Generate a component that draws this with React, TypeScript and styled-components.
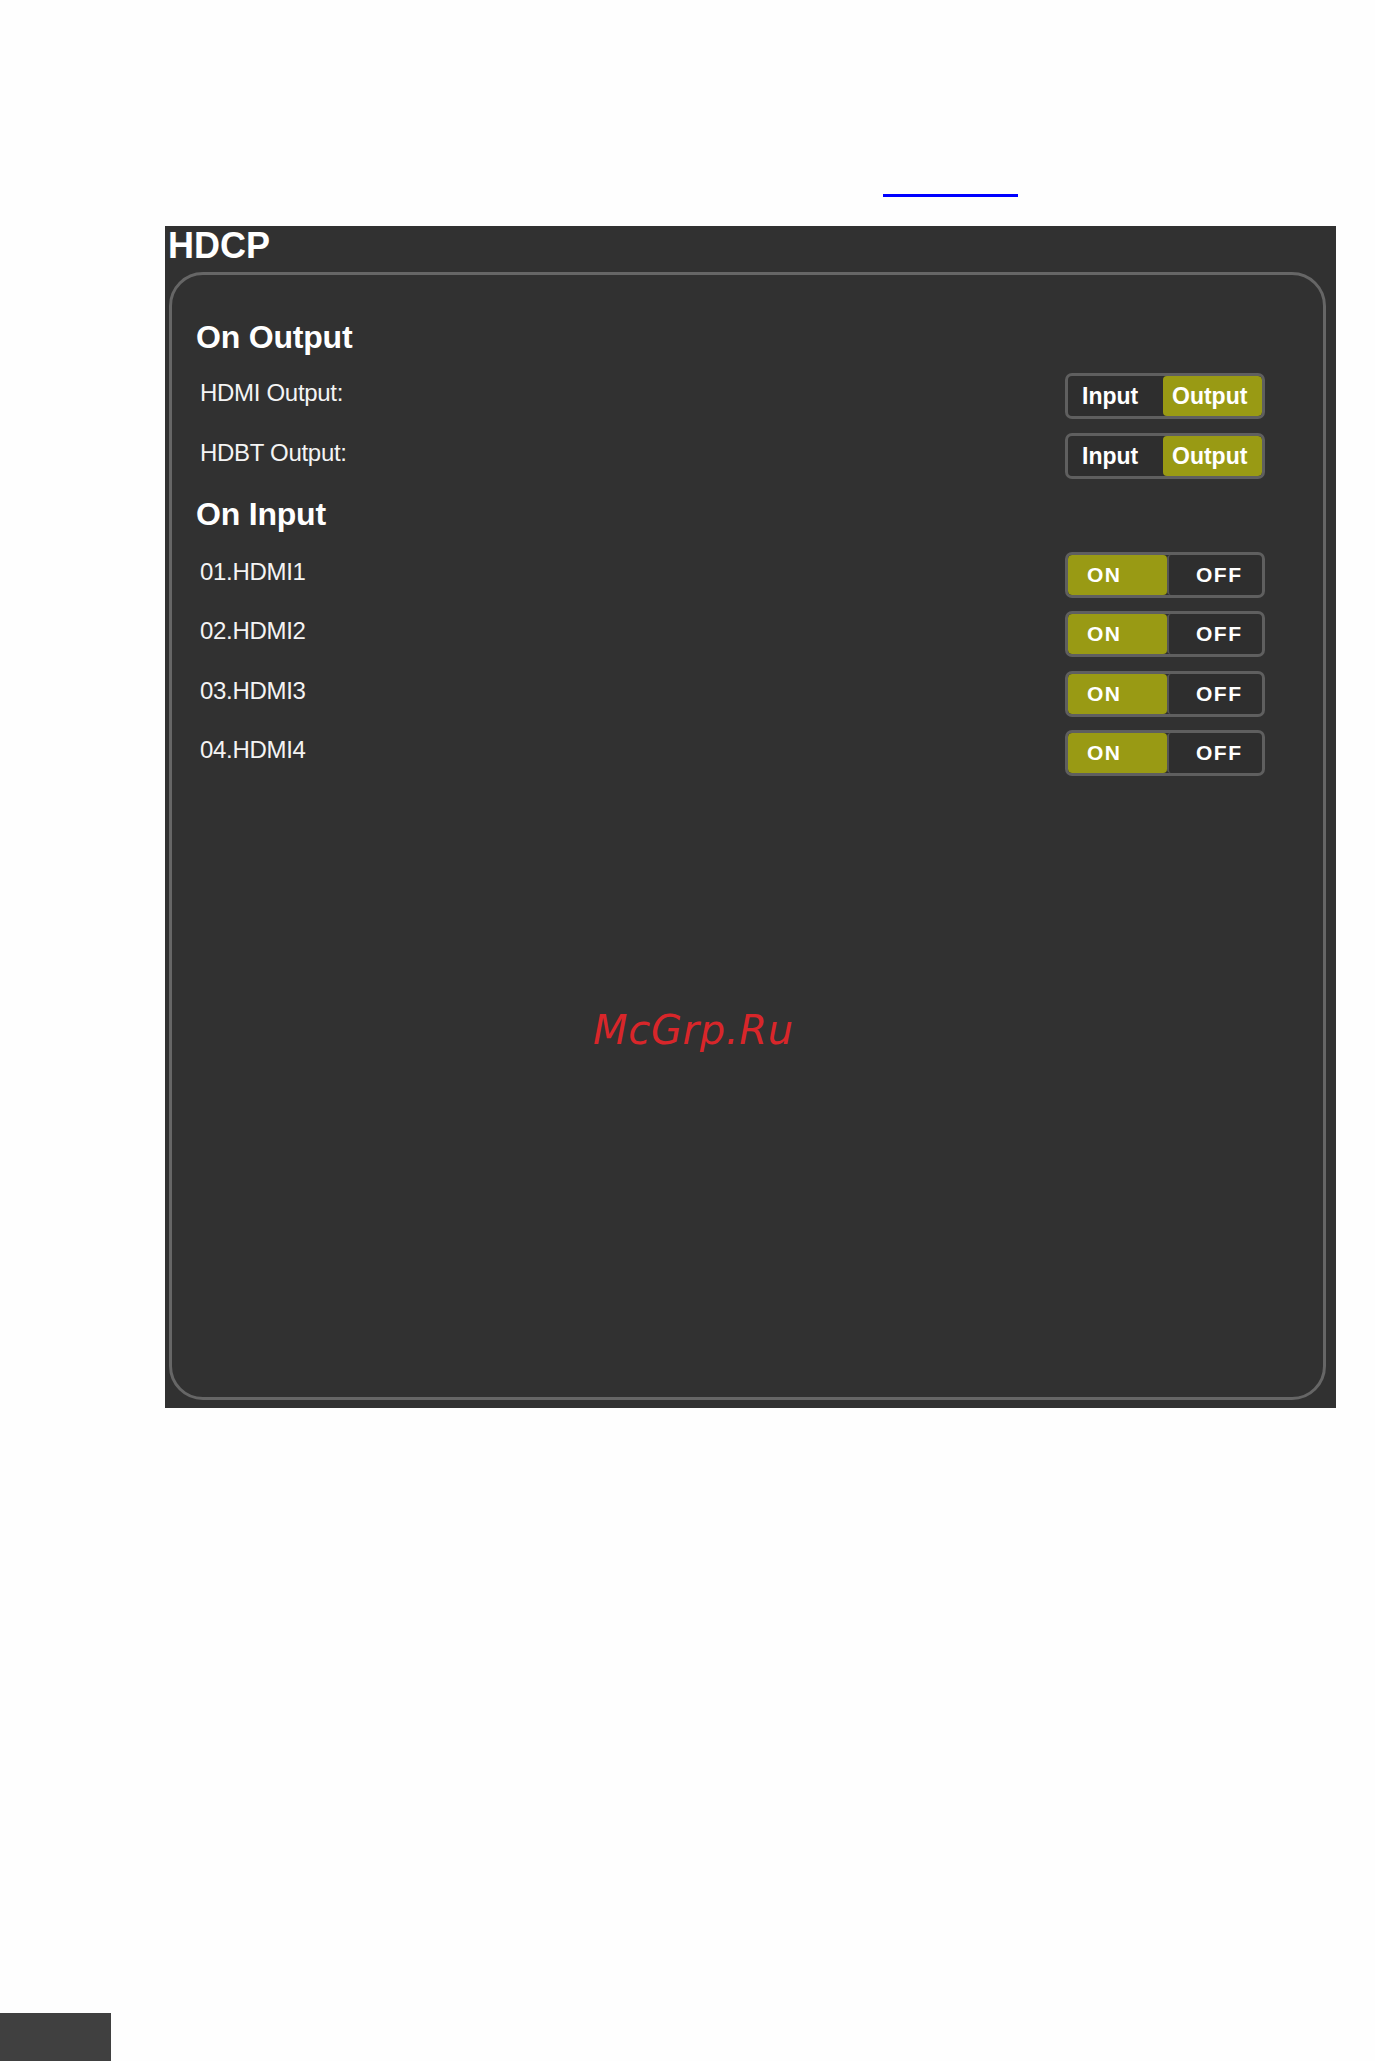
import React from "react";
import styled, { createGlobalStyle } from "styled-components";

const Global = createGlobalStyle`
  html, body { margin: 0; padding: 0; background: #fefefe; }
  body { font-family: "Liberation Sans", Arial, sans-serif; }
  * { box-sizing: border-box; }
`;

const Page = styled.div`
  position: relative;
  min-height: 2061px;
  display: flex;
  flex-direction: column;
`;

const Header = styled.div`
  height: 226px;
  padding: 194px 0 0 883px;
`;

const LinkLine = styled.a`
  display: block;
  width: 135px;
  height: 3px;
  background: #0000ff;
`;

const Panel = styled.section`
  margin-left: 165px;
  width: 1171px;
  height: 1182px;
  background: #313131;
  padding: 2px 10px 8px 4px;
  display: flex;
  flex-direction: column;
`;

const Title = styled.h1`
  margin: 0 0 8px -1px;
  font-size: 36px;
  line-height: 36px;
  font-weight: 700;
  letter-spacing: 0px;
  color: #ffffff;
`;

const Box = styled.div`
  flex: 1;
  border: 3px solid #666666;
  border-radius: 34px;
  padding: 47px 58px 0 23px;
  display: flex;
  flex-direction: column;
`;

const Heading = styled.h2<{ $top?: number; $bottom: number }>`
  margin: ${(p) => p.$top ?? 0}px 0 ${(p) => p.$bottom}px 1px;
  font-size: 32px;
  line-height: 31px;
  font-weight: 700;
  letter-spacing: -0.2px;
  color: #ffffff;
`;

const Rows = styled.div`
  display: flex;
  flex-direction: column;
  gap: 13.5px;
`;

const Row = styled.div`
  display: flex;
  align-items: center;
  justify-content: space-between;
  height: 46px;
`;

const Label = styled.span`
  padding-left: 5px;
  margin-bottom: 6px;
  font-size: 24px;
  line-height: 24px;
  letter-spacing: -0.3px;
  color: #f4f4f4;
`;

const Toggle = styled.div`
  display: flex;
  width: 200px;
  height: 46px;
  border: 3px solid #5f5f5f;
  border-radius: 7px;
  background: #2e2e2e;
  overflow: hidden;
`;

const Segment = styled.div<{ $active: boolean; $w: number; $pad: number; $divider?: boolean }>`
  width: ${(p) => p.$w}px;
  height: 100%;
  display: flex;
  align-items: center;
  padding-left: ${(p) => p.$pad}px;
  background: ${(p) => (p.$active ? "#999a14" : "transparent")};
  border-left: ${(p) => (p.$divider ? "2px solid #555555" : "none")};
  border-radius: 4px;
  color: #ffffff;
  font-weight: 700;
  font-size: 23px;
  line-height: 22px;
`;

const SwitchText = styled.span`
  font-size: 21px;
  letter-spacing: 1.5px;
`;

const Watermark = styled.div`
  position: absolute;
  left: 593px;
  top: 1010px;
  font-family: "DejaVu Sans", sans-serif;
  font-style: oblique;
  font-size: 40px;
  line-height: 40px;
  letter-spacing: 0.7px;
  color: #d8262a;
`;

const Tab = styled.div`
  margin-top: auto;
  width: 111px;
  height: 48px;
  background: #404040;
`;

const outputs = ["HDMI Output:", "HDBT Output:"];
const inputs = ["01.HDMI1", "02.HDMI2", "03.HDMI3", "04.HDMI4"];

export default function App() {
  return (
    <Page>
      <Global />
      <Header>
        <LinkLine href="#" aria-label="link" />
      </Header>
      <Panel>
        <Title>HDCP</Title>
        <Box>
          <Heading $bottom={20}>On Output</Heading>
          <Rows>
            {outputs.map((o) => (
              <Row key={o}>
                <Label>{o}</Label>
                <Toggle>
                  <Segment $active={false} $w={95} $pad={14}>Input</Segment>
                  <Segment $active={true} $w={99} $pad={9}>Output</Segment>
                </Toggle>
              </Row>
            ))}
          </Rows>
          <Heading $top={20} $bottom={22}>On Input</Heading>
          <Rows>
            {inputs.map((i) => (
              <Row key={i}>
                <Label>{i}</Label>
                <Toggle>
                  <Segment $active={true} $w={99} $pad={19}>
                    <SwitchText>ON</SwitchText>
                  </Segment>
                  <Segment $active={false} $w={95} $pad={27} $divider>
                    <SwitchText>OFF</SwitchText>
                  </Segment>
                </Toggle>
              </Row>
            ))}
          </Rows>
        </Box>
      </Panel>
      <Watermark>McGrp.Ru</Watermark>
      <Tab />
    </Page>
  );
}
